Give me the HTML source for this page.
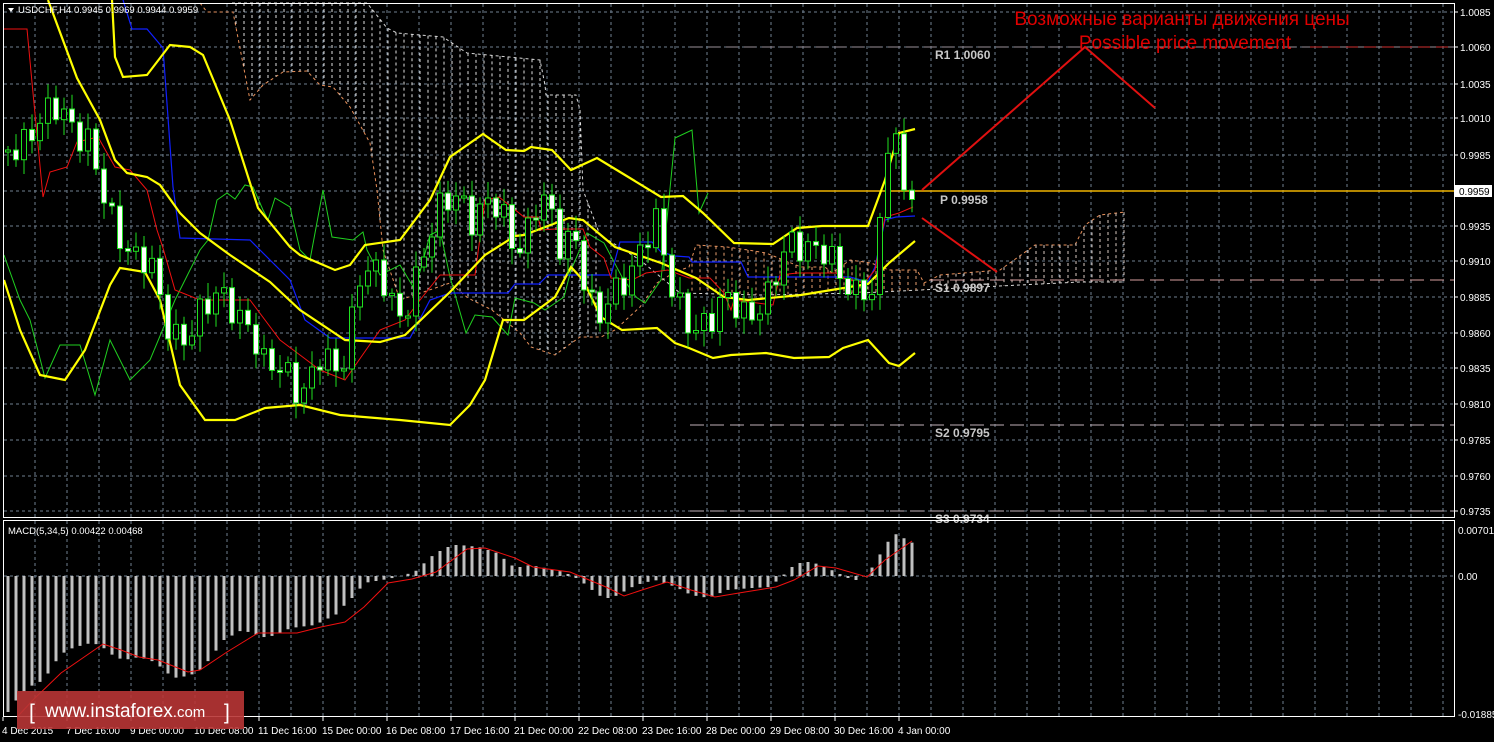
<!DOCTYPE html>
<html><head><meta charset="utf-8"><style>
html,body{margin:0;padding:0;background:#000;width:1494px;height:742px;overflow:hidden}
svg{display:block}
text{font-family:"Liberation Sans",sans-serif}
</style></head><body>
<svg id="s" width="1494" height="742" xmlns="http://www.w3.org/2000/svg">
<rect width="1494" height="742" fill="#000"/>
<g id="grid"></g>
<g id="cloud"></g>
<line x1="690" y1="47" x2="1454" y2="47" stroke="#9a8f98" stroke-dasharray="12,6" stroke-width="1"/>
<line x1="1310" y1="47" x2="1454" y2="47" stroke="#d03030" stroke-dasharray="12,6" stroke-width="1"/>
<line x1="930" y1="280" x2="1454" y2="280" stroke="#d8a0a0" stroke-dasharray="14,6" stroke-width="1"/>
<line x1="690" y1="425" x2="1454" y2="425" stroke="#c0b0b8" stroke-dasharray="14,6" stroke-width="1"/>
<line x1="690" y1="511" x2="1454" y2="511" stroke="#c0b0b8" stroke-dasharray="14,6" stroke-width="1"/>
<line x1="690" y1="191" x2="1454" y2="191" stroke="#f0b400" stroke-width="1.5"/>
<g font-family="Liberation Mono,monospace" font-size="12" font-weight="bold" fill="#c8c8c8">
<text x="935" y="59">R1 1.0060</text>
<text x="940" y="204">P 0.9958</text>
<text x="935" y="292">S1 0.9897</text>
<text x="935" y="437">S2 0.9795</text>
<text x="935" y="523">S3 0.9734</text>
</g>
<g id="lines"></g>
<g id="candles"></g>
<polyline points="922,190 1085,47 1155,108" fill="none" stroke="#e01010" stroke-width="2"/>
<line x1="922" y1="218" x2="997" y2="272" stroke="#e01010" stroke-width="2"/>
<text x="1182" y="25" text-anchor="middle" font-size="19" fill="#e00000">Возможные варианты движения цены</text>
<text x="1185" y="49" text-anchor="middle" font-size="19" fill="#e00000">Possible price movement</text>
<g id="macd"></g>
<rect x="3.5" y="3.5" width="1451" height="514" fill="none" stroke="#fff" stroke-width="1"/>
<rect x="3.5" y="520.5" width="1451" height="196" fill="none" stroke="#fff" stroke-width="1"/>
<g id="axis" font-size="10" fill="#fff"></g>
<rect x="1455" y="185" width="37" height="12" fill="#fff"/>
<text x="1459" y="195" font-size="10" fill="#000">0.9959</text>
<path d="M8 8 L14 8 L11 12 Z" fill="#fff"/>
<text x="18" y="13" font-size="9.5" fill="#fff">USDCHF,H4  0.9945 0.9969 0.9944 0.9959</text>
<text x="8" y="534" font-size="9.5" fill="#fff">MACD(5,34,5) 0.00422 0.00468</text>
<rect x="17" y="691" width="227" height="38" fill="#b83535" opacity="0.9"/>
<text x="29" y="719" font-size="21" fill="#fff">[</text>
<text x="45" y="717" font-size="19" fill="#fff">www.instaforex<tspan font-size="15">.com</tspan></text>
<text x="224" y="719" font-size="21" fill="#fff">]</text>
</svg>
<script>
var NS="http://www.w3.org/2000/svg";
function el(p,n,a){var e=document.createElementNS(NS,n);for(var k in a)e.setAttribute(k,a[k]);document.getElementById(p).appendChild(e);return e;}
function interp(pts,x){if(x<=pts[0][0])return pts[0][1];for(var i=1;i<pts.length;i++){if(x<=pts[i][0]){var a=pts[i-1],b=pts[i];return a[1]+(b[1]-a[1])*(x-a[0])/(b[0]-a[0]);}}return pts[pts.length-1][1];}
function pl(p,pts,c,w,dash){var a={points:pts.map(function(q){return q.join(",")}).join(" "),fill:"none",stroke:c,"stroke-width":w};if(dash)a["stroke-dasharray"]=dash;el(p,"polyline",a);}
var hy=[12,47,84,118,155,191,226,261,297,333,368,404,440,476,511];
hy.forEach(function(y){el("grid","line",{x1:4,y1:y,x2:1454,y2:y,stroke:"#6f7f8f","stroke-dasharray":"3,3"});});
for(var x=35;x<1454;x+=32){el("grid","line",{x1:x,y1:4,x2:x,y2:517,stroke:"#6f7f8f","stroke-dasharray":"3,3"});el("grid","line",{x1:x,y1:521,x2:x,y2:716,stroke:"#6f7f8f","stroke-dasharray":"3,3"});}
el("grid","line",{x1:4,y1:576,x2:1454,y2:576,stroke:"#6f7f8f","stroke-dasharray":"3,3"});
var orangeA=[[200,3],[207,12],[233,12],[250,100],[263,85],[283,72],[307,71],[320,85],[333,87],[350,107],[370,143],[377,190],[383,250],[400,300],[450,283],[468,298],[492,310],[520,333],[531,347],[555,355],[566,347],[580,337],[601,337],[615,330],[640,307],[657,283],[675,272],[689,267],[696,245],[727,247],[748,250],[766,253],[801,267],[825,267],[832,273],[850,260],[871,263],[889,270],[917,270],[924,283],[940,275],[1000,270],[1035,245],[1075,245],[1085,225],[1100,215],[1125,212]];
var whiteB=[[232,3],[367,3],[387,28],[397,33],[443,37],[467,53],[540,60],[545,85],[546,95],[576,95],[580,110],[583,190],[600,235],[640,260],[680,293],[760,295],[860,293],[920,290],[960,288],[1080,282],[1125,282]];
pl("cloud",orangeA,"#e8905a",1,"3,3");
pl("cloud",whiteB,"#d8d8d8",1,"3,3");
for(var x=236;x<1125;x+=8){if(x>600&&x<688)continue;var a=interp(orangeA,x),b=interp(whiteB,x);var t=Math.min(a,b),bt=Math.max(a,b);if(bt-t>3)el("cloud","line",{x1:x,y1:t,x2:x,y2:bt,stroke:x<600?"#e0e0e0":(x>925?"#d8c8c0":"#e8a070"),"stroke-dasharray":"3,3"});}
pl("lines",[[4,255],[20,300],[30,320],[45,378],[60,345],[80,345],[95,395],[110,340],[130,380],[150,360],[175,300],[200,250],[208,240],[217,200],[227,193],[235,199],[245,185],[253,187],[263,210],[268,220],[275,198],[290,207],[300,250],[310,260],[323,190],[332,237],[353,240],[363,232],[367,250],[380,275],[400,265],[415,290],[430,235],[440,230],[450,277],[466,333],[475,315],[492,317],[508,335],[515,298],[534,303],[545,310],[564,297],[571,270],[587,233],[604,243],[622,277],[636,297],[645,303],[661,280],[675,138],[692,130],[699,213],[708,193]],"#20d020",1);
pl("lines",[[123,0],[132,29],[147,29],[163,48],[173,187],[180,238],[250,240],[260,250],[290,280],[305,320],[330,338],[410,338],[430,300],[450,293],[508,293],[515,284],[539,284],[548,275],[611,275],[620,242],[652,242],[661,252],[675,256],[689,257],[692,262],[741,262],[748,277],[850,277],[868,282],[875,267],[885,220],[896,217],[915,216]],"#1020ff",1.2);
pl("lines",[[4,29],[27,29],[33,93],[43,197],[50,172],[67,167],[77,142],[98,137],[115,167],[130,170],[147,190],[157,230],[163,248],[175,290],[200,300],[250,300],[280,340],[300,355],[320,370],[345,380],[380,330],[405,320],[420,300],[440,275],[450,275],[475,275],[485,200],[499,197],[524,217],[538,217],[541,230],[555,229],[583,229],[590,247],[604,258],[611,278],[632,280],[646,273],[668,270],[689,278],[710,278],[724,293],[731,310],[734,300],[773,305],[780,275],[797,273],[836,273],[846,279],[864,283],[875,270],[885,217],[899,213],[913,207]],"#f01010",1);
pl("lines",[[112,0],[115,57],[123,77],[147,75],[170,45],[190,47],[203,55],[230,120],[258,208],[290,247],[300,255],[335,270],[350,265],[365,245],[400,240],[430,200],[450,157],[483,134],[506,150],[524,151],[531,147],[552,150],[571,170],[597,158],[625,175],[661,197],[683,196],[703,213],[734,243],[773,244],[797,228],[822,226],[868,226],[885,180],[899,133],[915,129]],"#ffff00",2.2);
pl("lines",[[48,0],[77,78],[100,120],[115,160],[127,173],[147,177],[160,185],[180,213],[200,233],[230,255],[270,282],[300,310],[345,340],[380,342],[405,335],[450,292],[485,255],[515,236],[524,235],[569,218],[583,220],[615,247],[661,263],[696,278],[724,297],[748,300],[801,295],[868,284],[889,263],[915,241]],"#ffff00",2.2);
pl("lines",[[4,280],[20,330],[40,375],[65,380],[85,350],[110,285],[120,268],[145,272],[160,300],[180,385],[205,420],[235,420],[265,408],[300,405],[340,415],[400,420],[450,425],[470,405],[485,380],[503,320],[524,320],[555,297],[571,267],[583,280],[601,317],[622,330],[657,328],[675,343],[689,348],[713,358],[731,355],[766,353],[794,358],[829,357],[843,348],[868,340],[889,363],[899,366],[915,353]],"#ffff00",2.2);
var key=[[8,150],[30,130],[60,110],[90,140],[100,190],[115,235],[150,260],[165,330],[180,340],[200,310],[220,300],[250,320],[265,370],[290,375],[300,390],[320,360],[340,380],[360,270],[370,265],[400,320],[420,260],[440,215],[460,190],[470,215],[490,205],[505,225],[515,250],[535,210],[540,190],[560,250],[575,230],[590,300],[600,320],[620,290],[640,245],[655,220],[670,290],[690,320],[710,325],[730,300],[750,310],[770,300],[790,240],[800,240],[815,245],[830,265],[850,290],[865,280],[874,300],[882,190],[891,135],[899,133],[906,213],[914,195]];
var prev=interp(key,0);
for(var i=0;i<114;i++){var x=8+8*i;var c=interp(key,x)+Math.round(14*Math.sin(i*2.3)+8*Math.sin(i*0.9));if(x>=880)c=interp(key,x);var o=prev;if(x==906)o=128;if(x==882)o=300;
var t=Math.min(o,c),b=Math.max(o,c);var hi=t-4-Math.abs(12*Math.sin(i*1.7)),lo=b+4+Math.abs(12*Math.cos(i*1.3));
el("candles","line",{x1:x,y1:hi,x2:x,y2:lo,stroke:"#20e020"});
if(b-t<2)b=t+2;
el("candles","rect",{x:x-2.5,y:t,width:5,height:b-t,fill:(c>o)?"#fff":"#000",stroke:"#20e020","stroke-width":1});
prev=c;}
var hist=[[8,712],[12,705],[27,688],[44,680],[52,667],[59,657],[67,650],[76,647],[91,643],[100,645],[115,657],[124,660],[139,657],[155,662],[164,670],[173,678],[182,677],[197,673],[209,660],[224,640],[242,630],[267,638],[291,628],[315,625],[339,613],[348,600],[354,597],[364,583],[388,579],[405,575],[418,570],[427,560],[436,553],[452,545],[460,545],[479,547],[497,553],[515,568],[530,565],[545,568],[564,572],[580,580],[588,587],[603,598],[612,598],[636,585],[655,580],[676,587],[691,595],[709,598],[727,590],[752,588],[770,587],[780,578],[788,571],[794,565],[803,562],[812,562],[827,568],[836,572],[852,580],[861,580],[876,563],[883,548],[891,538],[899,532],[907,542],[915,543]];
for(var i=0;i<114;i++){var x=8+8*i;var y=interp(hist,x);el("macd","line",{x1:x,y1:576,x2:x,y2:y,stroke:"#c0c0c0","stroke-width":3});}
pl("macd",[[18,716],[33,700],[61,673],[103,644],[121,650],[139,657],[158,660],[188,672],[200,670],[227,652],[258,633],[273,633],[297,633],[321,627],[345,622],[364,607],[388,583],[412,579],[436,572],[467,549],[485,548],[515,558],[533,567],[570,572],[606,587],[624,596],[642,590],[667,582],[691,590],[715,597],[745,592],[776,587],[794,580],[818,566],[836,568],[867,577],[885,560],[912,541]],"#f01010",1);
var pl2=["1.0085","1.0060","1.0035","1.0010","0.9985","","0.9935","0.9910","0.9885","0.9860","0.9835","0.9810","0.9785","0.9760","0.9735"];
hy.forEach(function(y,k){if(pl2[k]){var t=el("axis","text",{x:1460,y:y+4});t.textContent=pl2[k];el("axis","line",{x1:1454,y1:y,x2:1458,y2:y,stroke:"#fff"});}});
[["0.00701",534],["0.00",580],["-0.01885",718]].forEach(function(a){var t=el("axis","text",{x:1458,y:a[1]});t.textContent=a[0];});
var tl=["4 Dec 2015","7 Dec 16:00","9 Dec 00:00","10 Dec 08:00","11 Dec 16:00","15 Dec 00:00","16 Dec 08:00","17 Dec 16:00","21 Dec 00:00","22 Dec 08:00","23 Dec 16:00","28 Dec 00:00","29 Dec 08:00","30 Dec 16:00","4 Jan 00:00"];
tl.forEach(function(s,k){var x=3+64*k;var t=el("axis","text",{x:(k?x-1:2),y:734});t.textContent=s;el("axis","line",{x1:x,y1:717,x2:x,y2:721,stroke:"#fff"});});
</script>
</body></html>
